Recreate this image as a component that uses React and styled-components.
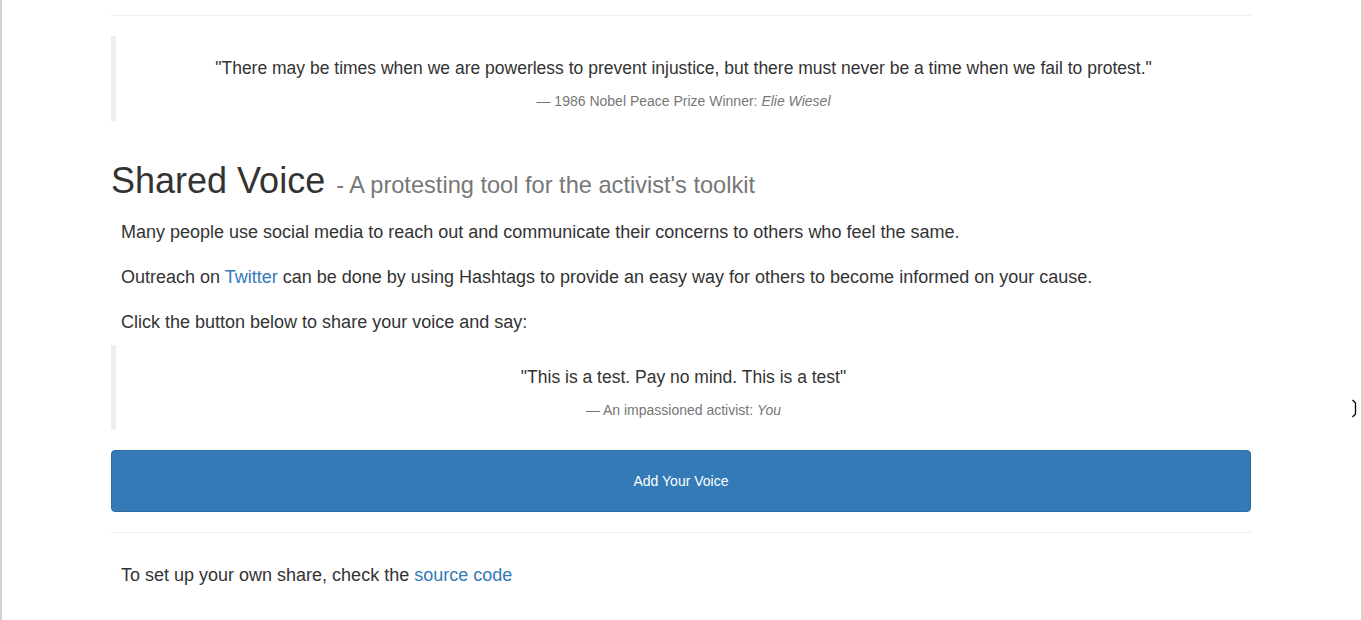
import React from "react";
import styled, { createGlobalStyle } from "styled-components";

const Global = createGlobalStyle`
  html, body { margin: 0; padding: 0; background: #fff; }
  body {
    font-family: "Liberation Sans", Arial, Helvetica, sans-serif;
    font-size: 14px;
    line-height: 1.42857;
    color: #333;
  }
  * { box-sizing: border-box; }
`;

const Frame = styled.div`
  position: relative;
  min-height: 620px;
  box-shadow: inset 2px 0 0 #d2d2d2, inset -1px 0 0 #d2d2d2;
`;

const Cursor = styled.svg`
  position: absolute;
  left: 1351px;
  top: 399px;
  width: 8px;
  height: 19px;
`;

const Container = styled.div`
  width: 1170px;
  margin: 0 auto;
  padding: 15px 15px 40px;
`;

const Rule = styled.hr`
  margin: ${(p) => p.$top || 0}px 0 20px;
  border: 0;
  border-top: 1px solid #eee;
  height: 0;
`;

const Quote = styled.blockquote`
  margin: 0 0 20px;
  padding: 20px 20px 10px;
  border-left: 5px solid #eee;
  text-align: center;
`;

const QuoteText = styled.p`
  margin: 0 0 10px;
  font-size: 17.5px;
  line-height: 25px;
  color: #333;
`;

const QuoteFooter = styled.footer`
  font-size: 14px;
  line-height: 20px;
  color: #777;
  em { font-style: italic; }
`;

const Title = styled.h1`
  margin: 40px 0 10px;
  font-size: 36px;
  font-weight: 500;
  line-height: 1.1;
  color: #333;
`;

const Subtitle = styled.small`
  font-size: 23.6px;
  font-weight: 400;
  color: #777;
  margin-left: 1px;
`;

const TextBlock = styled.div`
  padding: ${(p) => p.$pt}px 10px 0;
  margin-bottom: ${(p) => p.$mb || 0}px;
`;

const Para = styled.p`
  margin: 0 0 19.3px;
  font-size: 18px;
  line-height: 25.7px;
  &:last-child { margin-bottom: 0; }
`;

const Link = styled.a`
  color: #337ab7;
  text-decoration: none;
`;

const Button = styled.button`
  display: block;
  width: 100%;
  height: 62px;
  padding: 0 12px;
  border: 1px solid #2e6da4;
  border-radius: 4px;
  background: #337ab7;
  color: #fff;
  font-family: inherit;
  font-size: 14px;
  line-height: 20px;
  text-align: center;
  cursor: pointer;
`;

export default function App() {
  return (
    <>
      <Global />
      <Frame>
        <Container>
          <Rule />
          <Quote>
            <QuoteText>
              "There may be times when we are powerless to prevent injustice, but there must never be a time when we fail to protest."
            </QuoteText>
            <QuoteFooter>
              — 1986 Nobel Peace Prize Winner: <em>Elie Wiesel</em>
            </QuoteFooter>
          </Quote>
          <Title>
            Shared Voice <Subtitle>- A protesting tool for the activist's toolkit</Subtitle>
          </Title>
          <TextBlock $pt={9} $mb={10}>
            <Para>
              Many people use social media to reach out and communicate their concerns to others who feel the same.
            </Para>
            <Para>
              Outreach on <Link href="#">Twitter</Link> can be done by using Hashtags to provide an easy way for others to become informed on your cause.
            </Para>
            <Para>Click the button below to share your voice and say:</Para>
          </TextBlock>
          <Quote>
            <QuoteText>"This is a test. Pay no mind. This is a test"</QuoteText>
            <QuoteFooter>
              — An impassioned activist: <em>You</em>
            </QuoteFooter>
          </Quote>
          <Button type="button">Add Your Voice</Button>
          <Rule $top={20} />
          <TextBlock $pt={10} $mb={0}>
            <Para>
              To set up your own share, check the <Link href="#">source code</Link>
            </Para>
          </TextBlock>
        </Container>
        <Cursor viewBox="0 0 8 19">
          <path d="M1.5 1 L4.5 4 L4.5 15 L1.5 18" fill="none" stroke="#fff" strokeWidth="3" />
          <path d="M1.5 1 L4.5 4 L4.5 15 L1.5 18" fill="none" stroke="#000" strokeWidth="1.3" />
        </Cursor>
      </Frame>
    </>
  );
}
